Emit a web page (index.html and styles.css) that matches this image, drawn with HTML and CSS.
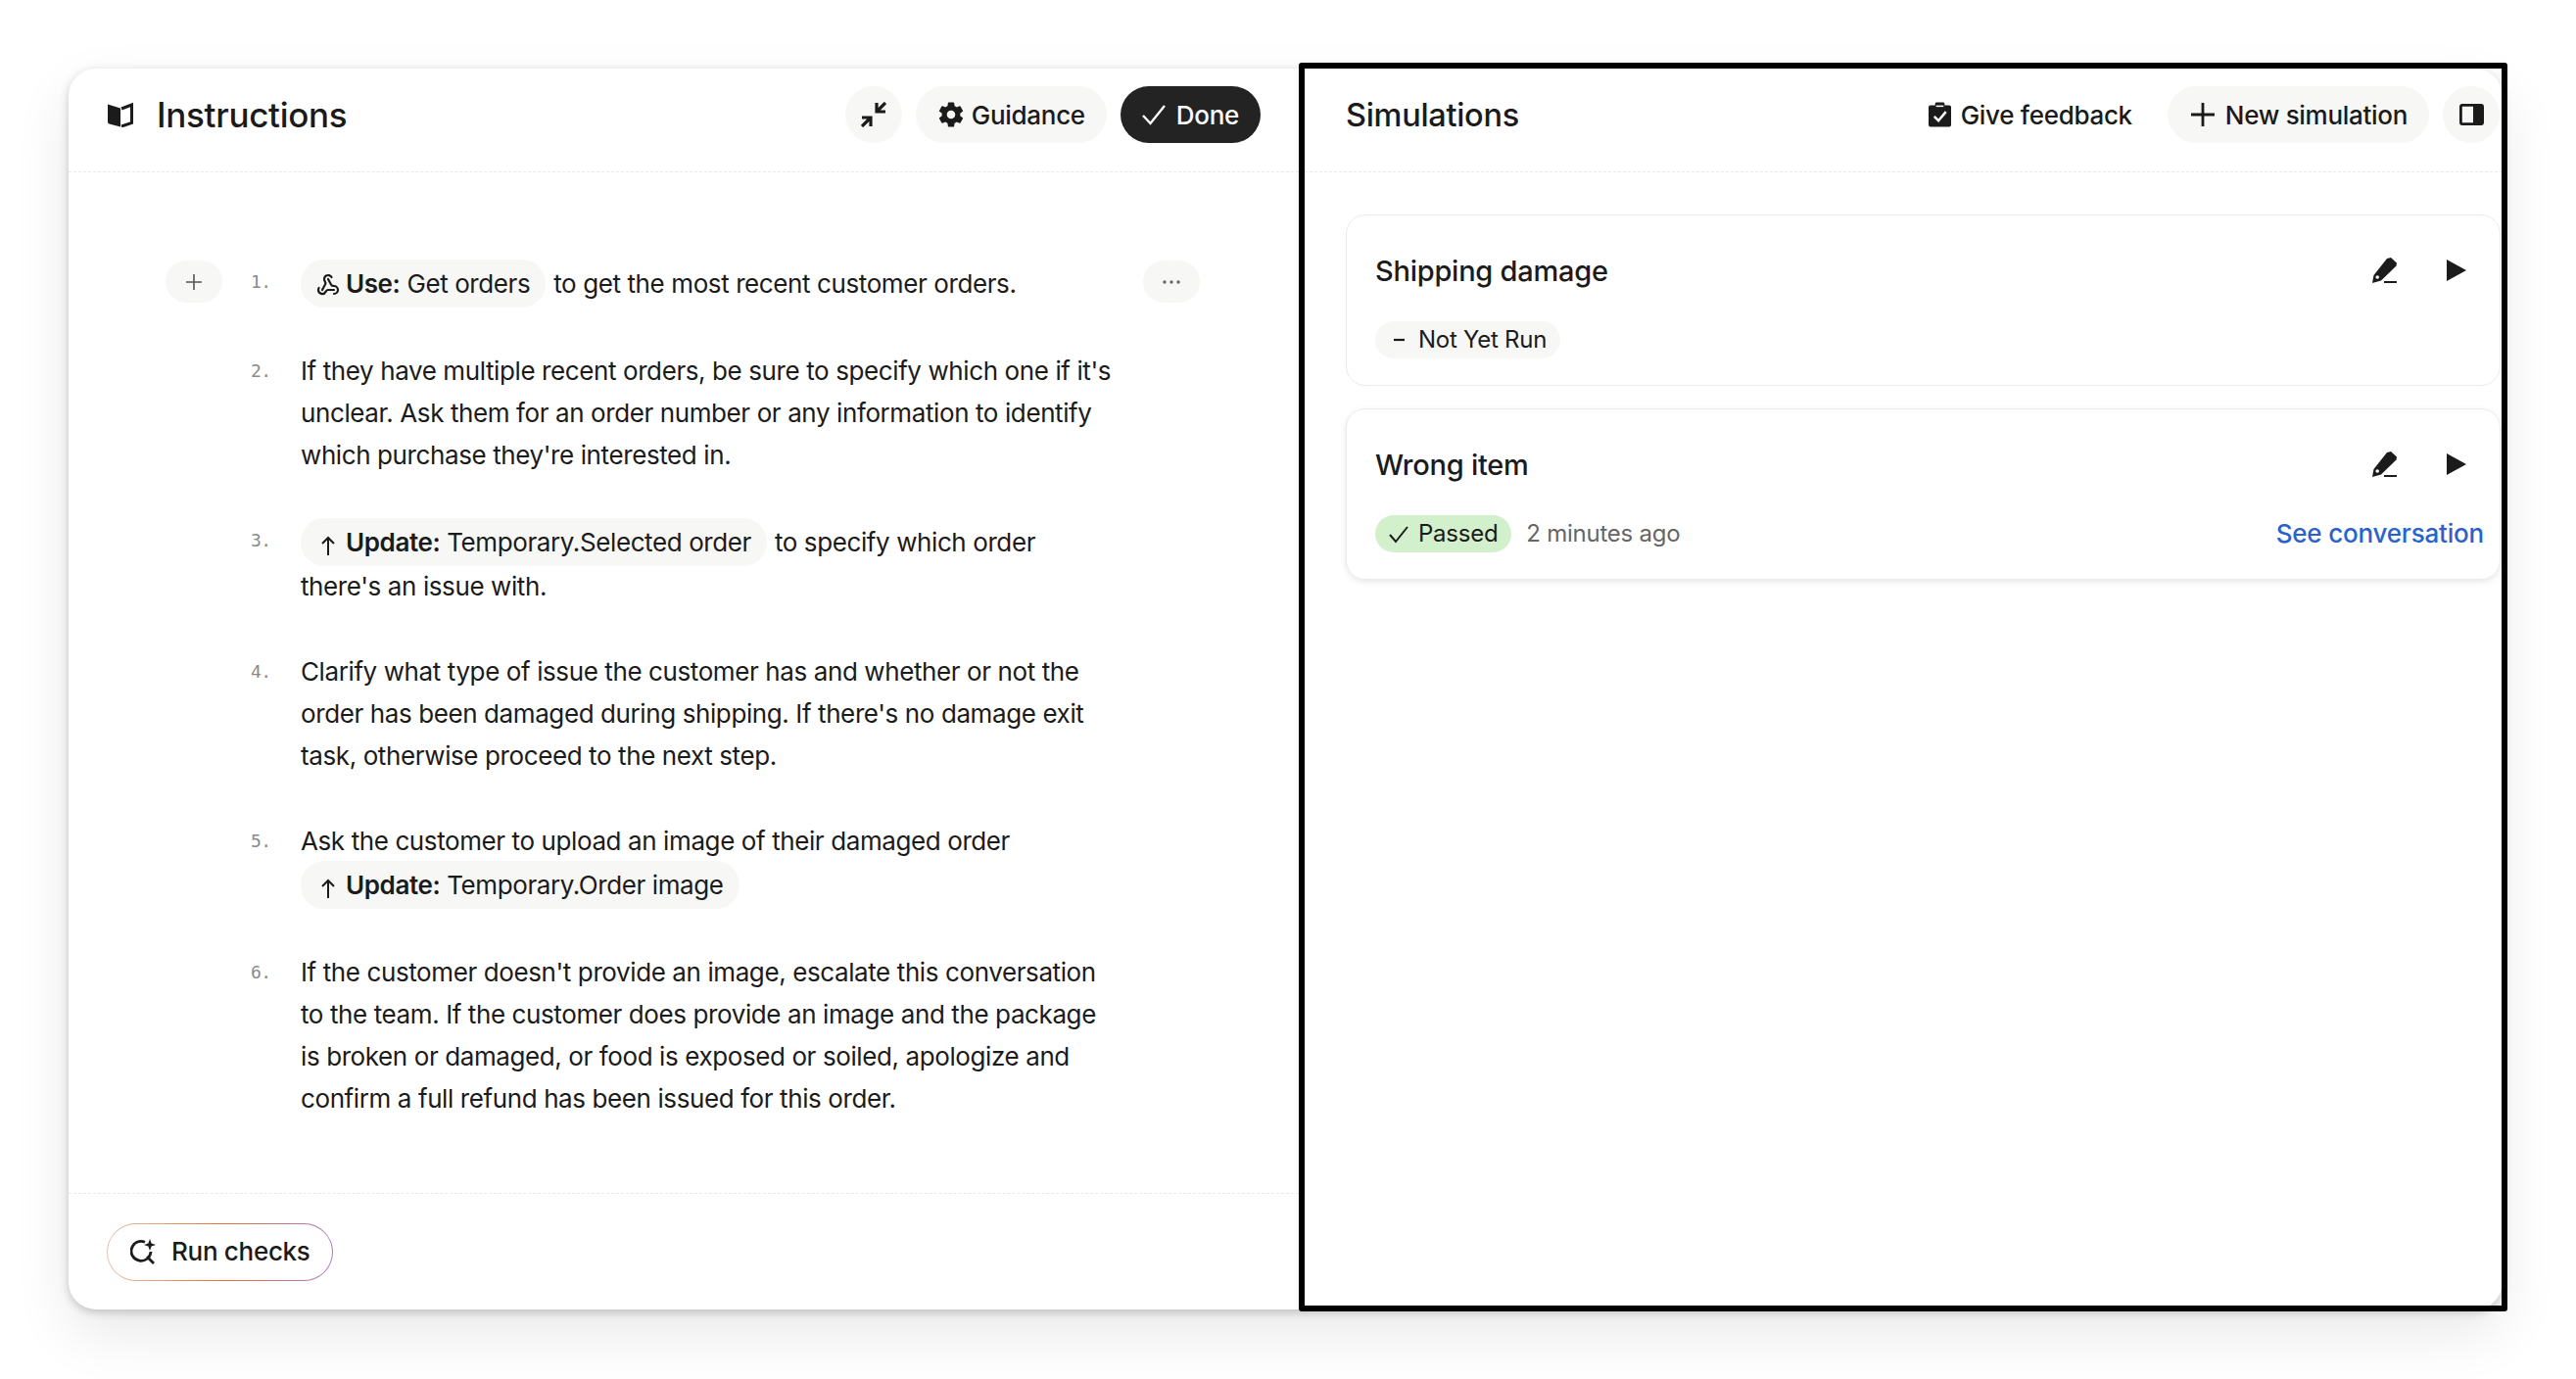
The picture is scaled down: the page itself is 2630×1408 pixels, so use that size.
FILE: index.html
```html
<!DOCTYPE html>
<html lang="en">
<head>
    <meta charset="UTF-8">
    <title>Instructions and Simulations</title>
    <link rel="stylesheet" href="styles.css">
</head>
<body>
    <main class="shell">
        <section class="panel panel-left">
            <header class="panel-head">
                <svg class="icon-book" viewBox="0 0 26 26"><path d="M0 2.5 13 6.5V25.5L1.5 22.5Q0 22 0 20.5Z" fill="#1b1b1b"/><path d="M14 7 24.5 3V21.5L14 25" fill="none" stroke="#1b1b1b" stroke-width="3"/></svg>
                <h1 class="panel-title title-instructions">Instructions</h1>
                <div class="head-actions">
                    <button class="btn btn-round">
                        <svg class="icon-26" viewBox="0 0 26 26" fill="none" stroke="#1b1b1b" stroke-width="3.2"><path d="M25 1 17 9M16 1V10H25M1 25 9 17M1 16H10V25"/></svg>
                    </button>
                    <button class="btn btn-guidance">
                        <svg class="icon-26" viewBox="2 2 20 20" fill="#1b1b1b"><path d="M19.14 12.94c.04-.3.06-.61.06-.94 0-.32-.02-.64-.07-.94l2.03-1.58c.18-.14.23-.41.12-.61l-1.92-3.32c-.12-.22-.37-.29-.59-.22l-2.39.96c-.5-.38-1.03-.7-1.62-.94l-.36-2.54c-.04-.24-.24-.41-.48-.41h-3.84c-.24 0-.43.17-.47.41l-.36 2.54c-.59.24-1.13.57-1.62.94l-2.39-.96c-.22-.08-.47 0-.59.22L2.74 8.87c-.12.21-.08.47.12.61l2.03 1.58c-.05.3-.09.63-.09.94s.02.64.07.94l-2.03 1.58c-.18.14-.23.41-.12.61l1.92 3.32c.12.22.37.29.59.22l2.39-.96c.5.38 1.03.7 1.62.94l.36 2.54c.05.24.24.41.48.41h3.84c.24 0 .44-.17.47-.41l.36-2.54c.59-.24 1.13-.56 1.62-.94l2.39.96c.22.08.47 0 .59-.22l1.92-3.32c.12-.22.07-.47-.12-.61l-2.01-1.58zM12 15.3c-1.82 0-3.3-1.48-3.3-3.3s1.48-3.3 3.3-3.3 3.3 1.48 3.3 3.3-1.48 3.3-3.3 3.3z"/></svg>
                        Guidance
                    </button>
                    <button class="btn btn-dark">
                        <svg class="icon-24" viewBox="0 0 24 24" fill="none" stroke="#fff" stroke-width="2.4"><path d="M1 13 8.5 21 23 3"/></svg>
                        Done
                    </button>
                </div>
            </header>

            <ol class="steps">
                <li class="step">
                    <button class="step-tool step-add">
                        <svg class="icon-16" viewBox="0 0 16 16" fill="none" stroke="#555" stroke-width="1.6"><path d="M8 0V16M0 8H16"/></svg>
                    </button>
                    <span class="step-num">1.</span>
                    <p class="step-text"><span class="chip"><svg class="icon-chip" viewBox="0 0 24 24" fill="none" stroke="#1b1b1b" stroke-width="2.2" stroke-linecap="round" stroke-linejoin="round"><path d="M18 16.98h-5.99c-1.1 0-1.95.94-2.48 1.9A4 4 0 0 1 2 17c.01-.7.2-1.4.57-2"/><path d="m6 17 3.13-5.78c.53-.97.1-2.18-.5-3.1a4 4 0 1 1 6.89-4.06"/><path d="m12 6 3.13 5.73C15.66 12.7 16.9 13 18 13a4 4 0 0 1 0 8"/></svg><b>Use:</b> Get orders</span> to get the most recent customer orders.</p>
                    <button class="step-tool step-more">
                        <svg class="icon-dots" viewBox="0 0 18 4" fill="#666"><circle cx="2" cy="2" r="1.7"/><circle cx="9" cy="2" r="1.7"/><circle cx="16" cy="2" r="1.7"/></svg>
                    </button>
                </li>
                <li class="step">
                    <span class="step-num">2.</span>
                    <p class="step-text">If they have multiple recent orders, be sure to specify which one if it's unclear. Ask them for an order number or any information to identify which purchase they're interested in.</p>
                </li>
                <li class="step">
                    <span class="step-num">3.</span>
                    <p class="step-text"><span class="chip"><svg class="icon-arrow" viewBox="0 0 16 20" fill="none" stroke="#1b1b1b" stroke-width="2"><path d="M8 20V2M2 8 8 2 14 8"/></svg><b>Update:</b> Temporary.Selected order</span> to specify which order there's an issue with.</p>
                </li>
                <li class="step">
                    <span class="step-num">4.</span>
                    <p class="step-text">Clarify what type of issue the customer has and whether or not the order has been damaged during shipping. If there's no damage exit task, otherwise proceed to the next step.</p>
                </li>
                <li class="step">
                    <span class="step-num">5.</span>
                    <p class="step-text">Ask the customer to upload an image of their damaged order <span class="chip"><svg class="icon-arrow" viewBox="0 0 16 20" fill="none" stroke="#1b1b1b" stroke-width="2"><path d="M8 20V2M2 8 8 2 14 8"/></svg><b>Update:</b> Temporary.Order image</span></p>
                </li>
                <li class="step">
                    <span class="step-num">6.</span>
                    <p class="step-text">If the customer doesn't provide an image, escalate this conversation to the team. If the customer does provide an image and the package is broken or damaged, or food is exposed or soiled, apologize and confirm a full refund has been issued for this order.</p>
                </li>
            </ol>

            <footer class="panel-foot">
                <button class="btn-checks">
                    <svg class="icon-26" viewBox="0 0 26 26" fill="none" stroke="#1b1b1b" stroke-width="2.8"><path d="M15 3.2A10 10 0 1 0 21 13M17 18 24 25"/><path d="M20 0 21.6 4.4 26 6 21.6 7.6 20 12 18.4 7.6 14 6 18.4 4.4Z" fill="#1b1b1b" stroke="none"/></svg>
                    Run checks
                </button>
            </footer>
        </section>

        <section class="panel panel-right">
            <header class="panel-head head-right">
                <h2 class="panel-title">Simulations</h2>
                <div class="head-actions">
                    <button class="btn btn-ghost">
                        <svg class="icon-clip" viewBox="0 0 24 26"><path d="M2 3H7V1.5Q7 0 8.5 0H15.5Q17 0 17 1.5V3H22Q24 3 24 5V24Q24 26 22 26H2Q0 26 0 24V5Q0 3 2 3Z" fill="#1b1b1b"/><path d="M6 15 10.5 19.5 18.5 10" fill="none" stroke="#fff" stroke-width="2.6"/><path d="M8 4H16" stroke="#fff" stroke-width="1.6"/></svg>
                        Give feedback
                    </button>
                    <button class="btn btn-new">
                        <svg class="icon-24" viewBox="0 0 24 24" fill="none" stroke="#1b1b1b" stroke-width="2.8"><path d="M12 0V24M0 12H24"/></svg>
                        New simulation
                    </button>
                    <button class="btn btn-round">
                        <svg class="icon-panel" viewBox="0 0 25 22"><rect x="1.4" y="1.4" width="22.2" height="19.2" rx="1.5" fill="none" stroke="#1b1b1b" stroke-width="2.8"/><rect x="14" y="1" width="10" height="20" fill="#1b1b1b"/></svg>
                    </button>
                </div>
            </header>

            <div class="sim-list">
                <article class="sim-card">
                    <div class="sim-row">
                        <h3 class="sim-name">Shipping damage</h3>
                        <div class="sim-actions">
                            <svg class="icon-26" viewBox="0 0 26 26"><path d="M0 26 1.5 18 15 1 19 0 25 5.5 24.5 8.5 9 23.5Z" fill="#1b1b1b"/><circle cx="5.2" cy="20" r="1.8" fill="#fff"/><rect x="12" y="24" width="13" height="2" fill="#1b1b1b"/></svg>
                            <svg class="icon-play" viewBox="0 0 20 22"><path d="M0 0 20 11 0 22Z" fill="#1b1b1b"/></svg>
                        </div>
                    </div>
                    <div class="sim-row sim-status">
                        <span class="pill"><svg class="icon-pill" viewBox="0 0 20 20" fill="none" stroke="#1b1b1b" stroke-width="2.2"><path d="M5 10H16"/></svg>Not Yet Run</span>
                    </div>
                </article>
                <article class="sim-card sim-card-raised">
                    <div class="sim-row">
                        <h3 class="sim-name">Wrong item</h3>
                        <div class="sim-actions">
                            <svg class="icon-26" viewBox="0 0 26 26"><path d="M0 26 1.5 18 15 1 19 0 25 5.5 24.5 8.5 9 23.5Z" fill="#1b1b1b"/><circle cx="5.2" cy="20" r="1.8" fill="#fff"/><rect x="12" y="24" width="13" height="2" fill="#1b1b1b"/></svg>
                            <svg class="icon-play" viewBox="0 0 20 22"><path d="M0 0 20 11 0 22Z" fill="#1b1b1b"/></svg>
                        </div>
                    </div>
                    <div class="sim-row sim-status">
                        <span class="pill pill-pass"><svg class="icon-pill" viewBox="0 0 20 20" fill="none" stroke="#1b1b1b" stroke-width="2"><path d="M1 11 7 18 19 3"/></svg>Passed</span>
                        <span class="sim-time">2 minutes ago</span>
                        <a class="sim-link" href="#">See conversation</a>
                    </div>
                </article>
            </div>
        </section>

        <div class="focus-frame"></div>
    </main>
</body>
</html>
```

FILE: styles.css
```css
* {
    margin: 0;
    padding: 0;
    box-sizing: border-box;
}

body {
    background: #fff;
    color: #1b1b1b;
    font-family: 'Inter', 'Liberation Sans', sans-serif;
    font-size: 26px;
    letter-spacing: -0.4px;
    padding: 70px 0 0 70px;
    height: 1408px;
    overflow: hidden;
}

button {
    font: inherit;
    letter-spacing: inherit;
    color: inherit;
    border: none;
    background: none;
}

svg {
    display: block;
    flex-shrink: 0;
}

.shell {
    position: relative;
    display: flex;
    width: 2485px;
    height: 1267px;
    background: #fff;
    border-radius: 28px;
    box-shadow: 0 3px 10px rgba(0, 0, 0, 0.2), 0 24px 60px rgba(0, 0, 0, 0.09);
}

/* black outline sits over the right panel */
.focus-frame {
    position: absolute;
    top: -6px;
    left: 1256px;
    right: -5px;
    bottom: -2px;
    border: 6px solid #000;
    border-radius: 3px;
    pointer-events: none;
}

.panel {
    display: flex;
    flex-direction: column;
}

.panel-left {
    width: 1256px;
}

.panel-right {
    flex: 1;
    min-width: 0;
    padding-left: 6px;
}

.panel-head {
    display: flex;
    align-items: center;
    height: 106px;
    padding: 0 39px 11px 40px;
    border-bottom: 1px dashed #e9e9e9;
    flex-shrink: 0;
}

.head-right {
    padding: 0 3px 11px 42px;
}

.panel-title {
    font-size: 32.5px;
    font-weight: 500;
    letter-spacing: -0.3px;
}

.title-instructions {
    font-size: 35px;
    margin-left: 24px;
}

.head-actions {
    display: flex;
    align-items: center;
    gap: 14px;
    margin-left: auto;
}

.btn {
    display: inline-flex;
    align-items: center;
    gap: 9px;
    height: 58px;
    padding: 0 22px;
    background: #f7f7f5;
    border-radius: 29px;
    font-size: 26px;
    font-weight: 500;
    letter-spacing: -0.3px;
}

.btn-guidance {
    gap: 8px;
    padding: 0 22px 0 23px;
}

.btn-new {
    gap: 11px;
    padding: 0 22px 0 24px;
}

.btn-round {
    width: 58px;
    padding: 0;
    justify-content: center;
}

.btn-dark {
    gap: 11px;
    background: #232323;
    color: #fff;
}

.btn-ghost {
    gap: 10px;
    background: none;
}

.icon-book {
    width: 26px;
    height: 26px;
}

.icon-16 {
    width: 16px;
    height: 16px;
}

.icon-24 {
    width: 24px;
    height: 24px;
}

.icon-26 {
    width: 26px;
    height: 26px;
}

.icon-clip {
    width: 23px;
    height: 26px;
}

.icon-panel {
    width: 25px;
    height: 22px;
}

.steps {
    list-style: none;
    flex: 1;
    padding: 90px 0 0 99px;
    width: 1155px;
}

.step {
    display: grid;
    grid-template-columns: 87px 51px 832px 1fr;
    margin-bottom: 44px;
    line-height: 43px;
}

.step-tool {
    display: flex;
    align-items: center;
    justify-content: center;
    width: 58px;
    height: 43px;
    background: #f7f7f5;
    border-radius: 22px;
}

.step-more {
    justify-self: end;
    grid-column: 4;
    grid-row: 1;
}

.icon-dots {
    width: 18px;
    height: 4px;
}

.step-num {
    grid-column: 2;
    font-family: 'DejaVu Sans Mono', 'Liberation Mono', monospace;
    font-size: 18px;
    letter-spacing: -0.5px;
    color: #8a8a8a;
}

.step-text {
    grid-column: 3;
}

.chip {
    display: inline-block;
    height: 49px;
    line-height: 49px;
    margin: -1px 1px -1px 0;
    padding: 0 16px;
    background: #f7f7f5;
    border-radius: 24px;
}

.chip b {
    font-weight: 600;
}

.chip svg {
    display: inline-block;
    vertical-align: -4px;
}

.icon-chip {
    width: 24px;
    height: 24px;
    margin-right: 6px;
}

.icon-arrow {
    width: 16px;
    height: 20px;
    margin: 0 10px 0 4px;
}

.panel-foot {
    display: flex;
    align-items: center;
    height: 119px;
    padding-left: 39px;
    border-top: 1px dashed #e9e9e9;
    flex-shrink: 0;
}

.btn-checks {
    display: inline-flex;
    align-items: center;
    gap: 16px;
    height: 59px;
    padding: 0 22px 1px 23px;
    border: 1.5px solid transparent;
    border-radius: 30px;
    background: linear-gradient(#fff, #fff) padding-box,
        linear-gradient(90deg, #e2c4ae, #e6703a 50%, #ab7cbb) border-box;
    font-size: 26px;
    font-weight: 500;
    letter-spacing: -0.3px;
}

.sim-list {
    display: flex;
    flex-direction: column;
    gap: 23px;
    padding: 43px 2px 0 42px;
}

.sim-card {
    height: 175px;
    padding: 37px 16px 0 29px;
    border: 1px solid #ebebeb;
    border-radius: 20px;
}

.sim-card-raised {
    box-shadow: 0 2px 6px rgba(0, 0, 0, 0.1);
}

.sim-row {
    display: flex;
    align-items: center;
    height: 38px;
}

.sim-status {
    margin-top: 33px;
}

.sim-name {
    font-size: 29px;
    font-weight: 500;
    letter-spacing: -0.25px;
}

.sim-actions {
    display: flex;
    align-items: center;
    gap: 50px;
    margin-left: auto;
    margin-right: 18px;
}

.icon-play {
    width: 20px;
    height: 22px;
}

.pill {
    display: inline-flex;
    align-items: center;
    gap: 10px;
    height: 38px;
    padding: 0 14px 1px;
    background: #f7f7f5;
    border-radius: 19px;
    font-size: 24px;
    letter-spacing: -0.25px;
}

.pill-pass {
    background: #d1f0cb;
}

.icon-pill {
    width: 20px;
    height: 20px;
}

.sim-time {
    margin: 0 0 1px 15px;
    font-size: 24px;
    letter-spacing: -0.25px;
    color: #666;
}

.sim-link {
    margin: 0 0 1px auto;
    font-size: 26px;
    font-weight: 500;
    letter-spacing: -0.2px;
    color: #2b62c9;
    text-decoration: none;
}
```
